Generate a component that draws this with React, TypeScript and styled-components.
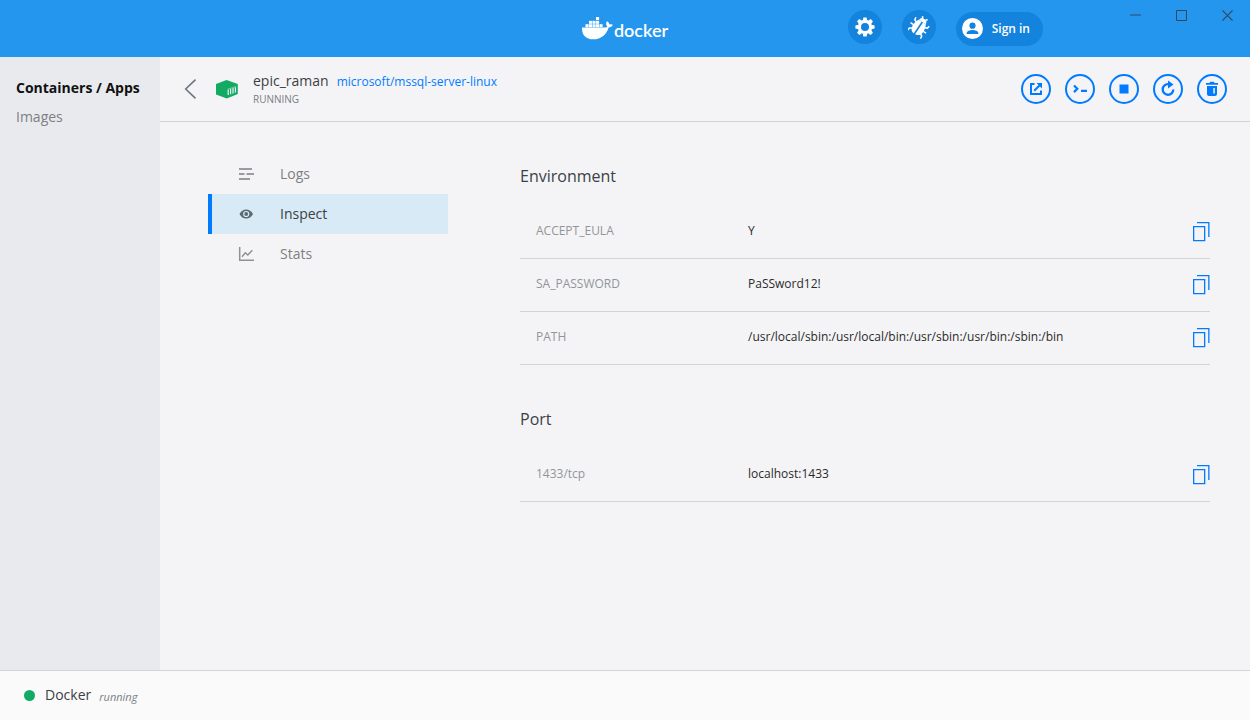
import React from 'react';
import styled, { createGlobalStyle, css } from 'styled-components';

const BLUE = '#007bff';

const GlobalStyle = createGlobalStyle`
  *, *::before, *::after { box-sizing: border-box; }
  body { margin: 0; }
  body, button, table { font-family: 'Open Sans', 'Noto Sans', sans-serif; }
  button { border: 0; padding: 0; background: none; color: inherit; cursor: pointer; }
  svg { display: block; flex: none; }
`;

const Window = styled.div`
  display: flex;
  flex-direction: column;
  min-height: 100vh;
  background: #f4f4f6;
  color: #3c4145;
`;

const TitleBar = styled.header`
  display: grid;
  grid-template-columns: 1fr auto 1fr;
  height: 57px;
  background: #2496ed;
  color: #fff;
`;

const Brand = styled.div`
  grid-column: 2;
  display: flex;
  align-items: center;
  gap: 1px;
`;

const Wordmark = styled.span`
  padding-top: 2px;
  font: 600 18px/24px Lato, sans-serif;
`;

const TitleRight = styled.div`
  display: flex;
  justify-content: flex-end;
  gap: 69px;
`;

const Tools = styled.div`
  display: flex;
  align-items: flex-start;
  gap: 20px;
  padding-top: 10px;
`;

const RoundTool = styled.button`
  display: grid;
  place-items: center;
  width: 34px;
  height: 34px;
  border-radius: 50%;
  background: #1383dd;
`;

const SignIn = styled.button`
  display: flex;
  align-items: center;
  gap: 9px;
  height: 34px;
  margin-top: 2px;
  padding: 0 13px 1px 6px;
  border-radius: 17px;
  background: #1383dd;
  color: #fff;
  font-size: 12px;
  font-weight: 600;
`;

const WindowControls = styled.div`
  display: flex;
`;

const WindowButton = styled.button`
  display: grid;
  place-items: center;
  width: 46px;
  height: 31px;
`;

const Body = styled.div`
  display: flex;
  flex: 1;
`;

const Sidebar = styled.nav`
  display: flex;
  flex-direction: column;
  gap: 5px;
  width: 160px;
  padding: 19px 16px;
  background: #e8eaee;
`;

const SideLink = styled.a<{ $active?: boolean }>`
  color: ${p => (p.$active ? '#111' : '#7d8083')};
  font-size: 14px;
  font-weight: ${p => (p.$active ? 700 : 400)};
  line-height: 24px;
  text-decoration: none;
  white-space: nowrap;
`;

const Main = styled.main`
  flex: 1;
  min-width: 0;
`;

const ContainerBar = styled.div`
  display: flex;
  align-items: center;
  height: 65px;
  padding: 0 23px 0 24px;
  border-bottom: 1px solid #d3d4d7;
`;

const ContainerIcon = styled.div`
  margin: 0 15px 0 19px;
`;

const Identity = styled.div`
  flex: 1;
`;

const NameLine = styled.div`
  display: flex;
  align-items: baseline;
  gap: 8px;
  line-height: 20px;
`;

const Name = styled.h1`
  margin: 0;
  font-size: 14px;
  font-weight: 400;
`;

const ImageLink = styled.a`
  color: ${BLUE};
  font-size: 12px;
  text-decoration: none;
`;

const State = styled.div`
  color: #777d83;
  font-size: 10px;
  line-height: 15px;
`;

const Actions = styled.div`
  display: flex;
  gap: 14px;
`;

const ActionButton = styled.button`
  display: grid;
  place-items: center;
  width: 30px;
  height: 30px;
  border: 2px solid ${BLUE};
  border-radius: 50%;
  color: ${BLUE};
`;

const Panels = styled.div`
  display: flex;
  gap: 72px;
  padding: 32px 40px 40px 48px;
`;

const Tabs = styled.nav`
  flex: none;
  width: 240px;
`;

const Tab = styled.a<{ $active?: boolean }>`
  display: flex;
  align-items: center;
  gap: 26px;
  height: 40px;
  padding-left: 26px;
  border-left: 4px solid transparent;
  color: #7d8083;
  font-size: 14px;
  line-height: 18px;
  text-decoration: none;
  ${p => p.$active && css`
    border-color: ${BLUE};
    background: #d8eaf5;
    color: #3c4145;
  `}
`;

const Sections = styled.div`
  display: flex;
  flex: 1;
  flex-direction: column;
  gap: 42px;
  min-width: 0;
  padding-top: 10px;
`;

const SectionTitle = styled.h2`
  margin: 0 0 18px;
  font-size: 16px;
  font-weight: 400;
  line-height: 24px;
`;

const Table = styled.table`
  width: 100%;
  border-collapse: separate;
  border-spacing: 0;
  font-size: 12px;
`;

const Row = styled.tr`
  height: 53px;
  > * {
    padding: 0 0 4px;
    border-bottom: 1px solid #d3d4d7;
  }
`;

const KeyCell = styled.th`
  width: 228px;
  && { padding-left: 16px; }
  color: #929598;
  font-weight: 400;
  text-align: left;
`;

const ValueCell = styled.td`
  color: #2a2a2a;
`;

const CopyCell = styled.td`
  width: 40px;
  && { padding-bottom: 0; }
`;

const CopyButton = styled.button`
  display: block;
  margin-left: auto;
`;

const StatusBar = styled.footer`
  display: flex;
  align-items: center;
  height: 50px;
  padding: 0 24px;
  border-top: 1px solid #d3d4d7;
  background: #fafafa;
  font-size: 14px;
  line-height: 18px;
`;

const Dot = styled.span`
  width: 11px;
  height: 11px;
  margin-right: 10px;
  border-radius: 50%;
  background: #13aa63;
`;

const Engine = styled.span`
  padding-bottom: 2px;
`;

const Running = styled.em`
  padding: 2px 0 0 8px;
  color: #777d83;
  font-size: 11px;
`;

const WhaleIcon = () => (
  <svg width="31" height="23" viewBox="0 0 31 23" fill="#fff">
    {[[14, 0], [7, 3.8], [10.5, 3.8], [14, 3.8], [3.5, 7.2], [7, 7.2], [10.5, 7.2], [14, 7.2], [17.5, 7.2]].map(([x, y]) => (
      <rect key={`${x}-${y}`} x={x} y={y} width="3.100" height="3" />
    ))}
    <path d="M0 10.600H22.500C24 10.600 25 10 25.300 9.400C23.800 8 23.800 5.600 25 4.200C26.600 5 27.400 6.600 27.400 7.600C28.600 7 30 7.200 30.800 7.800C30 9.600 28.400 10.400 26.600 10.400C24.600 17 19.600 22.300 11 22.300C3.500 22.300-.4 17.500 0 10.600Z" />
  </svg>
);

const GearIcon = () => (
  <svg width="20" height="20" viewBox="-10 -10 20 20" fill="#fff">
    {[0, 45, 90, 135, 180, 225, 270, 315].map(a => (
      <path key={a} d="M-2.3-6.5L-1.6-9.6H1.6L2.3-6.5Z" transform={`rotate(${a})`} />
    ))}
    <circle r="5.6" fill="none" stroke="#fff" strokeWidth="3.2" />
  </svg>
);

const BugIcon = () => (
  <svg width="22" height="24" viewBox="-11 -12 22 24" fill="none">
    <g transform="rotate(34)">
      <path d="M-4-6A4 3.600 0 0 1 4-6Z" fill="#fff" />
      <path d="M-.8-6V8.200C-4.400 8-6.200 5-6.200 1.400C-6.200-1.600-5.400-4-4.200-6ZM.8-6V8.200C4.400 8 6.200 5 6.200 1.400C6.200-1.600 5.400-4 4.200-6Z" fill="#fff" />
      <path d="M-5-2.600L-7.600-3.800L-8-6.400M-5.500 1.200H-9.400M-5 4.600L-7.400 6.200L-7.600 8.800M5-2.600L7.600-3.800L8-6.400M5.500 1.200H9.400M5 4.600L7.400 6.200L7.600 8.800M-1.600-9L-3.200-11M1.600-9L3-11" stroke="#fff" strokeWidth="1.500" />
    </g>
  </svg>
);

const UserIcon = () => (
  <svg width="21" height="21" viewBox="0 0 21 21">
    <circle cx="10.500" cy="10.500" r="10.500" fill="#fff" />
    <circle cx="10.500" cy="7.700" r="3.100" fill="#1383dd" />
    <path d="M4.700 16V15C4.700 12.800 8 11.900 10.500 11.900S16.300 12.800 16.300 15V16Z" fill="#1383dd" />
  </svg>
);

const MinimizeIcon = () => (
  <svg width="11" height="11" viewBox="0 0 11 11"><path d="M0 5H11" stroke="#2d6291" strokeWidth="1.500" /></svg>
);
const MaximizeIcon = () => (
  <svg width="11" height="11" viewBox="0 0 11 11"><path d="M.5.5H10.500V10.500H.5Z" fill="none" stroke="#31485c" /></svg>
);
const CloseIcon = () => (
  <svg width="11" height="11" viewBox="0 0 11 11"><path d="M.4.4L10.600 10.600M10.600.4L.4 10.600" stroke="#31485c" strokeWidth="1.200" /></svg>
);

const BackIcon = () => (
  <svg width="13" height="20" viewBox="0 0 13 20"><path d="M11.500.7L1.700 10L11.500 19.300" fill="none" stroke="#6f777e" strokeWidth="1.600" /></svg>
);

const CubeIcon = () => (
  <svg width="22" height="19" viewBox="0 0 22 19">
    <path d="M10.600 0L21.800 3.900V14L10.800 18.600L0 14.400V4Z" fill="#13aa63" />
    <path d="M12.200 9.400V15M14.600 8.700V14.200M17 8V13.500M19.400 7.200V12.600" stroke="#e7f6ee" strokeWidth="1.200" />
    <path d="M11.600 9.200L20 6.600" stroke="#8fd6b3" strokeWidth=".8" />
  </svg>
);

const OpenIcon = () => (
  <svg width="14" height="14" viewBox="0 0 14 14" fill="none" stroke="currentColor" strokeWidth="2">
    <path d="M5.500 2H2V12H12V8.500M5.200 8.800L11 3" />
    <path d="M7.500 1H13V6.500Z" fill="currentColor" stroke="none" />
  </svg>
);
const TerminalIcon = () => (
  <svg width="14" height="14" viewBox="0 0 14 14" fill="none" stroke="currentColor" strokeWidth="2.200">
    <path d="M1 3.500L4.300 6.800L1 10.100M8 8.800H14" />
  </svg>
);
const StopIcon = () => (
  <svg width="10" height="10" viewBox="0 0 10 10"><path d="M.5.5H9.500V9.500H.5Z" fill="currentColor" /></svg>
);
const RestartIcon = () => (
  <svg width="16" height="18" viewBox="0 0 16 18">
    <path d="M8.500 4.200A5.300 5.300 0 1 0 13.300 9.500" fill="none" stroke="currentColor" strokeWidth="2.300" />
    <path d="M8 .5L13.500 4.500L8 8.500Z" fill="currentColor" />
  </svg>
);
const TrashIcon = () => (
  <svg width="14" height="16" viewBox="0 0 14 16" fill="currentColor">
    <path d="M1 2H4.300L5.200.8H8.800L9.700 2H13V3.700H1Z" />
    <path fillRule="evenodd" d="M2 5H12V13Q12 15 10 15H4Q2 15 2 13ZM8.300 7V12.500H9.800V7Z" />
  </svg>
);

const LogsIcon = () => (
  <svg width="16" height="14" viewBox="0 0 16 14" fill="none" stroke="#999b9e" strokeWidth="2">
    <path d="M1 2H14M1 7H6.500M8.500 7H16M1 12H12" />
  </svg>
);
const EyeIcon = () => (
  <svg width="16" height="14" viewBox="0 0 16 14">
    <path fillRule="evenodd" fill="#5d6a73" d="M1.500 7C3 4 5.500 2.500 8.200 2.500S13.500 4 15 7C13.500 10 11 11.500 8.200 11.500S3 10 1.500 7ZM8.200 3.900A3.100 3.100 0 1 0 8.200 10.100A3.100 3.100 0 1 0 8.200 3.900Z" />
    <circle cx="8.200" cy="7" r="1.900" fill="#5d6a73" />
  </svg>
);
const StatsIcon = () => (
  <svg width="16" height="14" viewBox="0 0 16 14" fill="none" stroke="#8f9194" strokeWidth="1.500">
    <path d="M1.700 0V13.300H16M4 9.800L7.300 5.800L9.800 8L14.300 3.300" />
  </svg>
);

const CopyIcon = () => (
  <svg width="17" height="20" viewBox="0 0 17 20" fill="none" stroke={BLUE} strokeWidth="1.300">
    <path d="M.65 4.650H11.650V18.650H.65ZM4 .65H15.850V15" />
  </svg>
);

type Entry = [string, string];

const environment: Entry[] = [
  ['ACCEPT_EULA', 'Y'],
  ['SA_PASSWORD', 'PaSSword12!'],
  ['PATH', '/usr/local/sbin:/usr/local/bin:/usr/sbin:/usr/bin:/sbin:/bin'],
];

const ports: Entry[] = [['1433/tcp', 'localhost:1433']];

const EntrySection = ({ title, entries }: { title: string; entries: Entry[] }) => (
  <section>
    <SectionTitle>{title}</SectionTitle>
    <Table>
      <tbody>
        {entries.map(([key, value]) => (
          <Row key={key}>
            <KeyCell scope="row">{key}</KeyCell>
            <ValueCell>{value}</ValueCell>
            <CopyCell>
              <CopyButton aria-label={`Copy ${key}`}><CopyIcon /></CopyButton>
            </CopyCell>
          </Row>
        ))}
      </tbody>
    </Table>
  </section>
);

export default function App() {
  return (
    <Window>
      <GlobalStyle />
      <TitleBar>
        <Brand>
          <WhaleIcon />
          <Wordmark>docker</Wordmark>
        </Brand>
        <TitleRight>
          <Tools>
            <RoundTool aria-label="Settings"><GearIcon /></RoundTool>
            <RoundTool aria-label="Troubleshoot"><BugIcon /></RoundTool>
            <SignIn><UserIcon />Sign in</SignIn>
          </Tools>
          <WindowControls>
            <WindowButton aria-label="Minimize"><MinimizeIcon /></WindowButton>
            <WindowButton aria-label="Maximize"><MaximizeIcon /></WindowButton>
            <WindowButton aria-label="Close"><CloseIcon /></WindowButton>
          </WindowControls>
        </TitleRight>
      </TitleBar>
      <Body>
        <Sidebar>
          <SideLink href="#containers" $active>Containers / Apps</SideLink>
          <SideLink href="#images">Images</SideLink>
        </Sidebar>
        <Main>
          <ContainerBar>
            <button aria-label="Back"><BackIcon /></button>
            <ContainerIcon><CubeIcon /></ContainerIcon>
            <Identity>
              <NameLine>
                <Name>epic_raman</Name>
                <ImageLink href="#image">microsoft/mssql-server-linux</ImageLink>
              </NameLine>
              <State>RUNNING</State>
            </Identity>
            <Actions>
              <ActionButton aria-label="Open in browser"><OpenIcon /></ActionButton>
              <ActionButton aria-label="CLI"><TerminalIcon /></ActionButton>
              <ActionButton aria-label="Stop"><StopIcon /></ActionButton>
              <ActionButton aria-label="Restart"><RestartIcon /></ActionButton>
              <ActionButton aria-label="Delete"><TrashIcon /></ActionButton>
            </Actions>
          </ContainerBar>
          <Panels>
            <Tabs>
              <Tab href="#logs"><LogsIcon />Logs</Tab>
              <Tab href="#inspect" $active><EyeIcon />Inspect</Tab>
              <Tab href="#stats"><StatsIcon />Stats</Tab>
            </Tabs>
            <Sections>
              <EntrySection title="Environment" entries={environment} />
              <EntrySection title="Port" entries={ports} />
            </Sections>
          </Panels>
        </Main>
      </Body>
      <StatusBar>
        <Dot />
        <Engine>Docker</Engine>
        <Running>running</Running>
      </StatusBar>
    </Window>
  );
}
